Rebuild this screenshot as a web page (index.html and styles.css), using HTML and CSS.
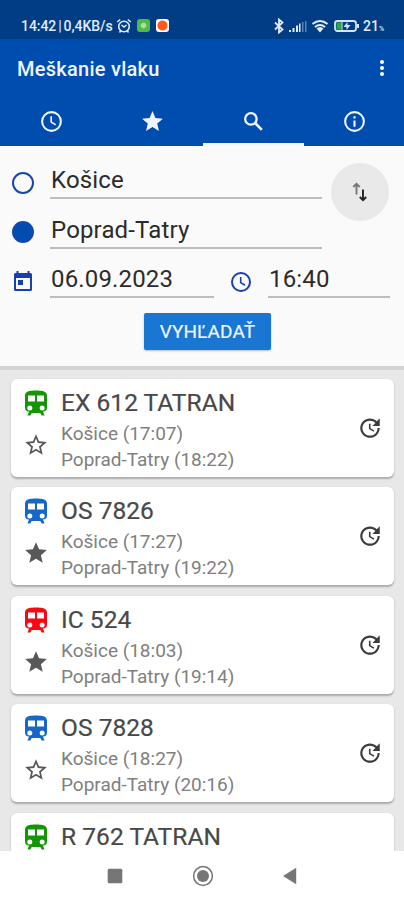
FILE: index.html
```
<!DOCTYPE html>
<html lang="sk">
<head>
<meta charset="utf-8">
<title>Meškanie vlaku</title>
<link rel="stylesheet" href="styles.css">
</head>
<body>
<svg class="defs" width="0" height="0" aria-hidden="true">
  <symbol id="train" viewBox="0 0 22 26">
    <path fill="currentColor" fill-rule="evenodd" d="M4.500 1C6.500 .2 15.500 .2 17.500 1C20 1.600 22 2.800 22 5.500V17.500Q22 21.300 18 21.500L19.500 25.500H16.700L15.300 23H6.700L5.300 25.500H2.500L4 21.500Q0 21.300 0 17.500V5.500C0 2.800 2 1.600 4.500 1ZM3 5.500V11.500H10V5.500ZM12 5.500V11.500H19V5.500ZM4.800 15.500A2.500 2.500 0 1 0 4.800 20.500A2.500 2.500 0 1 0 4.800 15.500ZM17.200 15.500A2.500 2.500 0 1 0 17.200 20.500A2.500 2.500 0 1 0 17.200 15.500Z"/>
  </symbol>
  <symbol id="star" viewBox="0 0 24 24"><path fill="currentColor" d="M12 17.27L18.18 21l-1.64-7.030L22 9.240l-7.190-.61L12 2 9.190 8.630 2 9.240l5.460 4.730L5.820 21z"/></symbol>
  <symbol id="star-line" viewBox="0 0 24 24"><path fill="currentColor" d="M22 9.240l-7.190-.62L12 2 9.190 8.630 2 9.240l5.460 4.730L5.820 21 12 17.270 18.180 21l-1.630-7.030L22 9.240zM12 15.400l-3.760 2.270 1-4.280-3.320-2.880 4.380-.38L12 6.100l1.710 4.040 4.380.38-3.320 2.880 1 4.280L12 15.400z"/></symbol>
  <symbol id="clock" viewBox="0 0 24 24"><circle cx="12" cy="12" r="9" fill="none" stroke="currentColor" stroke-width="2"/><path fill="none" stroke="currentColor" stroke-width="1.600" d="M11.700 7V12.600L16 15.200"/></symbol>
  <symbol id="update" viewBox="0 0 24 24"><path fill="currentColor" d="M21 10.120h-6.780l2.740-2.820c-2.730-2.700-7.150-2.800-9.880-.1-2.730 2.710-2.730 7.080 0 9.790s7.150 2.710 9.880 0C18.320 15.650 19 14.080 19 12.100h2c0 1.980-.88 4.550-2.640 6.290-3.510 3.480-9.210 3.480-12.720 0-3.500-3.470-3.530-9.110-.02-12.580s9.140-3.470 12.650 0L21 3v7.120zM12.500 8v4.250l3.500 2.080-.72 1.210L11 13V8h1.500z"/></symbol>
</svg>
<div class="screen">
  <div class="status">
    <span class="status-time">14:42 | 0,4KB/s</span>
    <svg class="alarm" viewBox="0 0 16 16" fill="none" stroke="currentColor"><circle cx="8" cy="8.500" r="5.300" stroke-width="1.600"/><path stroke-width="1.500" d="M1.200 4L4.200 1.500M14.800 4L11.800 1.500M5.500 7L8 9L10.500 7M3.500 14.500l1.500-2M12.500 14.500L11 12.500"/></svg>
    <span class="app app-green"></span>
    <span class="app app-white"></span>
    <span class="grow"></span>
    <svg class="bt" viewBox="0 0 10 16" fill="none" stroke="currentColor" stroke-width="1.800"><path d="M1 4.500L8.500 11.500L5 14.500V1.500L8.500 4.500L1 11.500"/></svg>
    <svg class="signal" viewBox="0 0 19 14" fill="currentColor"><path d="M1 11h2v2H1zM4.500 9h2v4h-2zM8 6.500h2V13H8zM11 4.500h1.500V13H11z"/><path opacity=".4" d="M14 3h1.500v10H14zM17 2h1.500v11H17z"/></svg>
    <svg class="wifi" viewBox="0 0 18 14" fill="none" stroke="currentColor"><path stroke-width="2" d="M1.500 5Q9-1 16.500 5M4 8Q9 4 14 8"/><path fill="currentColor" stroke="none" d="M5.500 9.500Q9 6.500 12.500 9.500L9 13.500z"/></svg>
    <svg class="battery" viewBox="0 0 26 14"><rect x="1" y="2" width="21" height="10" rx="2.500" fill="none" stroke="#d8e4f5" stroke-width="1.800"/><path fill="#32a83c" d="M2.500 3.500h5v7h-5z"/><path fill="#d8e4f5" d="M7.500 3h1v8h-1zM23 5h2v4h-2zM9.500 8L13.500 3V6H16.500L12.500 11V8z"/></svg>
    <span class="pct">21<small>%</small></span>
  </div>
  <header class="appbar">
    <div class="titlebar">
      <h1>Meškanie vlaku</h1>
      <div class="dots"><i></i><i></i><i></i></div>
    </div>
    <nav class="tabs">
      <a><svg><use href="#clock"/></svg></a>
      <a><svg><use href="#star"/></svg></a>
      <a class="active"><svg viewBox="0 0 24 24"><circle cx="9.500" cy="9.500" r="5.500" fill="none" stroke="currentColor" stroke-width="2.200"/><path fill="none" stroke="currentColor" stroke-width="2.600" d="M13.500 13.500L20 20"/></svg></a>
      <a><svg viewBox="0 0 24 24"><circle cx="12" cy="12" r="9" fill="none" stroke="currentColor" stroke-width="2"/><path fill="currentColor" d="M11 11h2v6h-2zM11 7h2v2h-2z"/></svg></a>
    </nav>
  </header>
  <section class="search">
    <div class="places">
      <div class="fields">
        <div class="row"><span class="ring"></span><div class="field">Košice</div></div>
        <div class="row"><span class="ring full"></span><div class="field">Poprad-Tatry</div></div>
      </div>
      <div class="swap"><svg viewBox="0 0 16 20" fill="none" stroke-width="1.900"><path stroke="#777" d="M4.500 12.500V2.500M1.300 5L4.500 1.800L7.700 5"/><path stroke="#222" d="M11 7.500V17.500M7.800 15L11 18.200L14.200 15"/></svg></div>
    </div>
    <div class="row when">
      <svg class="cal" viewBox="0 0 20 22"><path fill="currentColor" fill-rule="evenodd" d="M3.500 1H5.500V3H14.500V1H16.500V3H17.500Q19 3 19 4.500V19.500Q19 21 17.500 21H2.500Q1 21 1 19.500V4.500Q1 3 2.500 3H3.500ZM3 8V19H17V8ZM5 10H10V15H5Z"/></svg>
      <div class="field date">06.09.2023</div>
      <svg class="clk"><use href="#clock"/></svg>
      <div class="field time">16:40</div>
    </div>
    <button class="go">VYHĽADAŤ</button>
  </section>
  <main class="list">
    <article class="card">
      <div class="icons"><svg class="train green"><use href="#train"/></svg><svg class="fav"><use href="#star-line"/></svg></div>
      <div class="info"><h2>EX 612 TATRAN</h2><p>Košice (17:07)</p><p>Poprad-Tatry (18:22)</p></div>
      <svg class="update"><use href="#update"/></svg>
    </article>
    <article class="card">
      <div class="icons"><svg class="train blue"><use href="#train"/></svg><svg class="fav"><use href="#star"/></svg></div>
      <div class="info"><h2>OS 7826</h2><p>Košice (17:27)</p><p>Poprad-Tatry (19:22)</p></div>
      <svg class="update"><use href="#update"/></svg>
    </article>
    <article class="card">
      <div class="icons"><svg class="train red"><use href="#train"/></svg><svg class="fav"><use href="#star"/></svg></div>
      <div class="info"><h2>IC 524</h2><p>Košice (18:03)</p><p>Poprad-Tatry (19:14)</p></div>
      <svg class="update"><use href="#update"/></svg>
    </article>
    <article class="card">
      <div class="icons"><svg class="train blue"><use href="#train"/></svg><svg class="fav"><use href="#star-line"/></svg></div>
      <div class="info"><h2>OS 7828</h2><p>Košice (18:27)</p><p>Poprad-Tatry (20:16)</p></div>
      <svg class="update"><use href="#update"/></svg>
    </article>
    <article class="card">
      <div class="icons"><svg class="train green"><use href="#train"/></svg></div>
      <div class="info"><h2>R 762 TATRAN</h2></div>
      <svg class="update"><use href="#update"/></svg>
    </article>
  </main>
  <footer class="navbar">
    <svg viewBox="0 0 24 24"><rect x="4.700" y="4.700" width="14.600" height="14.600" rx="1.500" fill="#767676"/></svg>
    <svg viewBox="0 0 24 24"><circle cx="12" cy="12" r="9.400" fill="none" stroke="#767676" stroke-width="1.500"/><circle cx="12" cy="12" r="6" fill="#767676"/></svg>
    <svg viewBox="0 0 24 24"><path fill="#767676" d="M5 12L18.200 3.800V20.200Z"/></svg>
  </footer>
</div>
</body>
</html>
```
FILE: styles.css
```
* { box-sizing: border-box; margin: 0; padding: 0; }
body { font-family: Roboto, "Noto Sans", sans-serif; background: #fff; overflow: hidden; }
.defs { position: absolute; }
svg { display: block; flex: none; }
.screen { width: 404px; height: 900px; display: flex; flex-direction: column; overflow: hidden; }

.status { height: 39px; flex: none; background: #003d85; color: #e3ebf8; display: flex; align-items: center; padding: 12px 18px 0 21px; font-size: 14px; font-weight: 500; }
.status-time { width: 93px; white-space: nowrap; word-spacing: -1.500px; letter-spacing: -.05px; }
.alarm { width: 16px; height: 16px; margin-left: 2px; }
.app { width: 13px; height: 13px; border-radius: 3px; margin-left: 5px; }
.app-green { background: radial-gradient(circle, #a5e39a 0 2px, #4dbb46 3.500px); }
.app-white { background: radial-gradient(circle, #ff5a1c 0 4.500px, #fff 5.500px); margin-left: 6px; }
.grow { flex: 1; }
.bt { width: 10px; height: 16px; }
.signal { width: 19px; height: 14px; margin-left: 4px; }
.wifi { width: 18px; height: 14px; margin-left: 4px; }
.battery { width: 26px; height: 14px; margin-left: 5px; }
.pct { margin-left: 3px; width: 23px; white-space: nowrap; }
.pct small { font-size: 7px; }

.appbar { height: 107px; flex: none; background: #004db0; color: #f0f5ff; display: flex; flex-direction: column; }
.titlebar { height: 60px; display: flex; align-items: center; justify-content: space-between; padding: 0 20px 0 17px; }
.titlebar h1 { font-size: 20px; font-weight: 500; letter-spacing: .26px; line-height: 24px; }
.dots { display: flex; flex-direction: column; gap: 2px; padding-bottom: 2px; }
.dots i { width: 4px; height: 4px; border-radius: 50%; background: #fff; }
.tabs { flex: 1; display: grid; grid-template-columns: repeat(4, 1fr); padding-left: 1px; margin-right: -1px; }
.tabs a { display: flex; justify-content: center; padding-top: 10px; }
.tabs a.active { border-bottom: 3px solid #f4f7ff; }
.tabs svg { width: 25px; height: 25px; }

.search { height: 220px; flex: none; background: #fafafa; display: flex; flex-direction: column; padding: 6px 14px 0 12px; color: #222; }
.places { display: flex; height: 99px; }
.fields { width: 310px; }
.row { display: flex; align-items: flex-start; }
.ring { width: 22px; height: 22px; border: 2px solid #1749ad; border-radius: 50%; margin: 19.500px 16px 0 0; flex: none; }
.ring.full { background: #004db0; }
.field { font-size: 24px; letter-spacing: .15px; line-height: 34px; height: 47px; padding: 11px 0 0 1px; border-bottom: 2px solid #bdbdbd; flex: 1; white-space: nowrap; color: #2b2b2b; }
.fields .row { height: 49.500px; }
.swap { width: 58px; height: 58px; border-radius: 50%; background: #e9e9e9; margin: 11px 0 0 9px; display: flex; align-items: center; justify-content: center; flex: none; }
.swap svg { width: 16px; height: 20px; }
.when { height: 49px; color: #173fae; }
.cal { width: 20px; height: 22px; margin: 19px 17px 0 1px; }
.clk { width: 24px; height: 24px; margin: 18.500px 15px 0; }
.date { flex: none; width: 164px; }
.go { align-self: center; width: 127px; height: 37px; margin: 13px 0 0 13px; border: 0; border-radius: 2px; background: #1976d2; color: #edf5ff; font: 400 19px/37px Roboto, sans-serif; letter-spacing: .1px; box-shadow: 0 1px 2px #bbb; white-space: nowrap; -webkit-text-stroke: .2px #edf5ff; }

.list { flex: 1; min-height: 0; overflow: hidden; background: #e8e8e8; border-top: 4px solid #d3d3d3; padding: 9px 10px 0 11px; display: flex; flex-direction: column; gap: 10.400px; }
.card { height: 98px; flex: none; background: #fff; border-radius: 6px; box-shadow: 0 1.500px 2px #aaa; display: flex; align-items: flex-start; padding: 0 11px 0 13px; }
.icons { width: 37px; flex: none; }
.train { width: 24px; height: 26px; margin: 11px 0 0; }
.fav { width: 26px; height: 26px; margin: 16px 0 0 -1px; color: #585858; }
.green { color: #149604; }
.blue { color: #1668c8; }
.red { color: #fb0712; }
.info { flex: 1; white-space: nowrap; padding-top: 8px; }
.info h2 { font-size: 24.500px; font-weight: 400; letter-spacing: .05px; line-height: 32px; color: #484848; margin-bottom: 2px; -webkit-text-stroke: .2px #484848; }
.info p { font-size: 19px; line-height: 26px; color: #808080; }
.update { width: 26px; height: 26px; margin-top: 36px; color: #3c3c3c; }

.navbar { height: 49px; flex: none; background: #fff; display: flex; justify-content: space-between; padding: 13px 102px 0 103px; }
.navbar svg { width: 24px; height: 24px; }
```
